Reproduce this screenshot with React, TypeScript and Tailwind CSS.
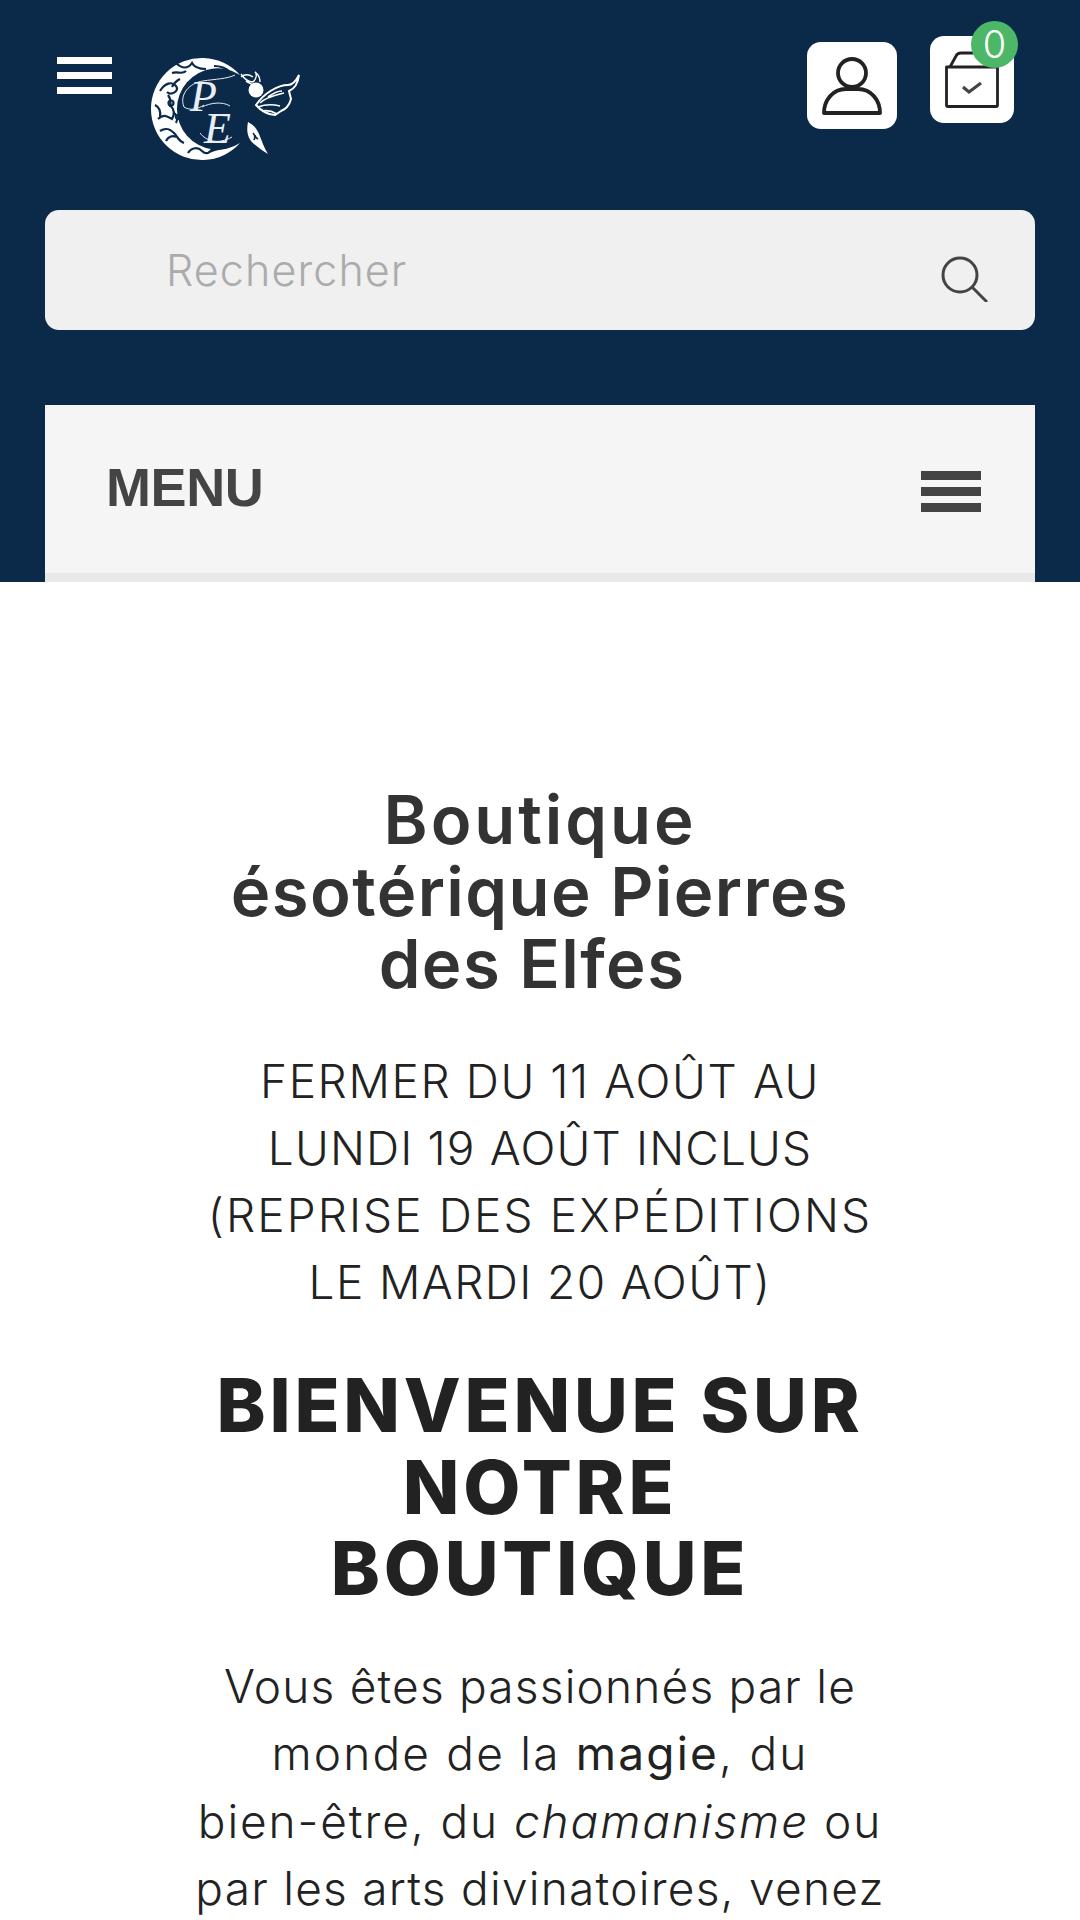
function Logo() {
    return (
        <svg width="150" height="104" viewBox="0 0 150 104" fill="none" className="ml-[38px] mt-[57px] shrink-0">
            {/* croissant */}
            <path d="M90 18A51 51 0 1 0 90 86A40.7 40.7 0 1 1 90 18Z" fill="#fff" />
            <g stroke="#0b2a4a" strokeWidth="2.2" fill="none">
                <path d="M10 34c5-8 12-10 16-5s-5 10-9 6M8 62c6-6 10-2 14 0 3-5 2-10-2-14M10 74c6-4 10-2 14 2s4 8 10 10M26 6c6 6 12 6 16 0 2 4 8 6 14 6M22 16c6-2 10 2 14-2" />
                <path d="M38 96c4-6 10-6 14-2s8 2 10-2M58 96c4-4 12-4 18-6M18 38c3 4 3 8 2 12M24 56c3 2 4 6 2 10M64 9c6 0 12 2 16 6M5 48c4 2 6 6 5 12M16 84c2-4 6-6 10-4M30 22c-4 2-6 4-8 8" />
                <circle cx="21" cy="46" r="2.5" />
                <circle cx="28" cy="60" r="2" />
            </g>
            {/* initiales */}
            <text fontSize="44" fontStyle="italic" fontFamily="'Liberation Serif', serif" fill="#e8eef4">
                <tspan x="40" y="54">P</tspan>
                <tspan x="54" y="86">E</tspan>
            </text>
            <path d="M34 50c-5-12 5-24 19-26 12-2 24-2 32-6M34 50c6 4 14 2 20-2M52 50c8-4 20-6 28-1M50 76c6 8 18 12 32 4" stroke="#e8eef4" strokeWidth="1" />
            {/* papillon */}
            <circle cx="106" cy="33" r="7.5" fill="#fff" />
            <path d="M91 17c4 6 8 8 12 8M91 20c5-4 9-2 12 0M103 25c4-4 4-8 2-10 3 2 5 6 5 10M96 24c2 2 4 2 7 4" stroke="#fff" strokeWidth="1.4" />
            <path d="M106 48c8-12 22-20 32-20 4 0 8-4 11-10-1 8-5 14-10 16l2 8c-2 8-6 10-10 12l-6 4c-6 0-14-4-19-10z" stroke="#fff" strokeWidth="2" fill="#0b2a4a" />
            <path d="M110 46c6-6 16-8 24-10M108 50c8-3 14-3 22-1M112 54c5-1 10 0 15 3M118 40c4-3 8-6 14-6" stroke="#fff" strokeWidth="1.6" />
            <path d="M98 65c-2 10 0 17 6 22 5 4 9 7 14 10-4-6-6-13-9-20-2-5-5-9-11-12z" fill="#fff" />
            <path d="M103 76c2 2 2 5 1 7M108 82c-2-1-3-2-3-4" stroke="#0b2a4a" strokeWidth="1.6" />
        </svg>
    );
}

function Header() {
    return (
        <header className="bg-[#0b2a4a] h-[582px] px-[45px] flex flex-col">
            <div className="h-[210px] flex items-start">
                <div className="mt-[57px] ml-[12px] w-[55px] flex flex-col gap-[8px]">
                    <span className="h-[7px] bg-white"></span>
                    <span className="h-[7px] bg-white"></span>
                    <span className="h-[7px] bg-white"></span>
                </div>
                <Logo />
                <div className="ml-auto flex items-start mr-[21px]">
                    <div className="mt-[42px] w-[90px] h-[87px] bg-white rounded-[14px] flex items-center justify-center">
                        <svg width="62" height="58" viewBox="0 0 62 58" fill="none" stroke="#222" strokeWidth="3.8">
                            <circle cx="31" cy="16" r="14" />
                            <path d="M3 56c0-13 9-24 22-24h12c13 0 22 11 22 24z" strokeLinejoin="round" />
                        </svg>
                    </div>
                    <div className="relative mt-[36px] ml-[33px] w-[84px] h-[87px] bg-white rounded-[14px] flex justify-center pt-[15px]">
                        <svg width="54" height="57" viewBox="0 0 54 57" fill="none" stroke="#222" strokeWidth="2.8">
                            <path d="M5 16l6-11c1-2 3-3 5-3h24c2 0 4 1 5 3l4 11" />
                            <path d="M1.5 16h51v38a1.5 1.5 0 0 1-1.5 1.5H3A1.5 1.5 0 0 1 1.5 54z" strokeLinejoin="round" />
                            <path d="M18 36l6 5 12-9" stroke="#444" strokeWidth="3.2" />
                        </svg>
                        <span className="absolute top-[-15px] right-[-4px] w-[47px] h-[47px] rounded-full bg-[#4cb867] text-white text-[38px] leading-[47px] text-center font-['Inter',sans-serif] font-light">
                            0
                        </span>
                    </div>
                </div>
            </div>
            <div className="h-[120px] bg-[#f0f0f0] rounded-[14px] flex items-center pl-[121px] pr-[47px]">
                <span className="font-['Inter',sans-serif] text-[43px] tracking-[1.1px] font-light text-[#ababab]">Rechercher</span>
                <svg width="47" height="46" viewBox="0 0 47 46" fill="none" stroke="#444" strokeWidth="3" className="ml-auto mt-[17px]">
                    <circle cx="19" cy="19" r="17" />
                    <path d="M31 31l15 15" />
                </svg>
            </div>
            <div className="mt-[75px] h-[177px] bg-[#f5f5f5] border-b-[9px] border-[#e8e8e8] flex items-start px-[61px] pt-[52px]">
                <span className="font-['Liberation_Sans',sans-serif] font-bold text-[54px] leading-[60px] tracking-[-0.4px] text-[#444444]">MENU</span>
                <div className="ml-auto mr-[-7px] mt-[14px] w-[60px] flex flex-col gap-[7px]">
                    <span className="h-[9px] bg-[#444444]"></span>
                    <span className="h-[9px] bg-[#444444]"></span>
                    <span className="h-[9px] bg-[#444444]"></span>
                </div>
            </div>
        </header>
    );
}

export default function App() {
    return (
        <div className="w-[1080px] h-[1920px] overflow-hidden bg-white font-['Inter',sans-serif] text-center">
            <Header />
            <main className="pt-[202px]">
                <h2 className="text-[67px] leading-[72px] font-semibold text-[#333333] tracking-[1.4px]">
                    <span className="block tracking-[2.9px]">Boutique</span>
                    <span className="block">ésotérique Pierres</span>
                    <span className="block pr-[16px]">des Elfes</span>
                </h2>
                <p className="mt-[48px] text-[46px] leading-[67px] font-light text-[#222222]">
                    <span className="block tracking-[1.6px]">FERMER DU 11 AOÛT AU</span>
                    <span className="block tracking-[1.15px]">LUNDI 19 AOÛT INCLUS</span>
                    <span className="block tracking-[2.1px]">(REPRISE DES EXPÉDITIONS</span>
                    <span className="block tracking-[1.4px]">LE MARDI 20 AOÛT)</span>
                </p>
                <h1 className="mt-[49px] text-[74px] leading-[81.5px] font-extrabold text-[#222222] tracking-[3.8px]">
                    <span className="block">BIENVENUE SUR</span>
                    <span className="block">NOTRE</span>
                    <span className="block">BOUTIQUE</span>
                </h1>
                <p className="mt-[43px] text-[46px] leading-[67.5px] font-light text-[#222222]">
                    <span className="block tracking-[1.2px]">Vous êtes passionnés par le</span>
                    <span className="block tracking-[2.2px]">monde de la <strong className="font-normal">magie</strong>, du</span>
                    <span className="block tracking-[1.9px]">bien-être, du <em>chamanisme</em> ou</span>
                    <span className="block tracking-[1.25px]">par les arts divinatoires, venez</span>
                </p>
            </main>
        </div>
    );
}
